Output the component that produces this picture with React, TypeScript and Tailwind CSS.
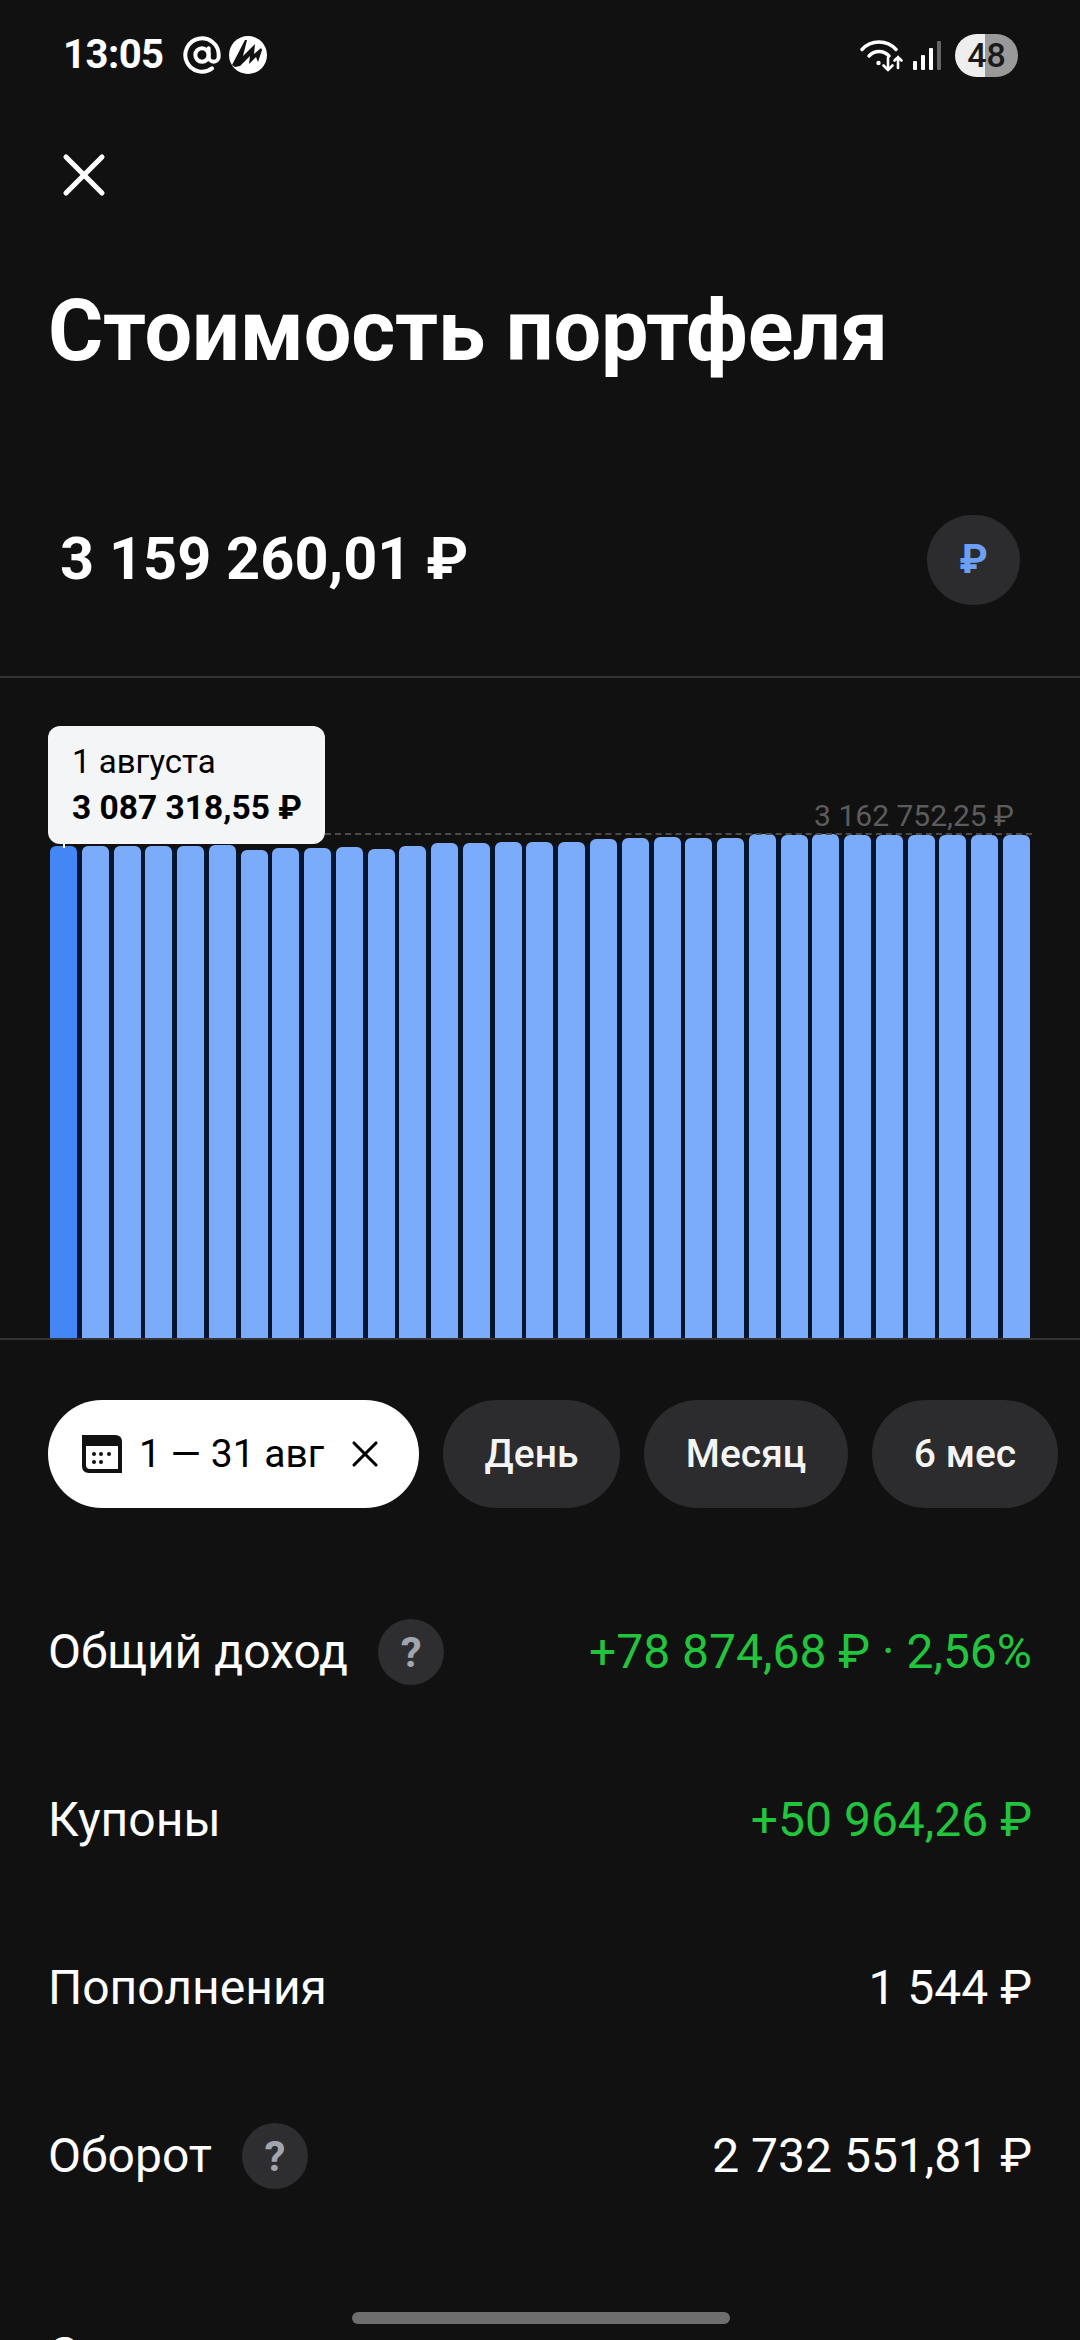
import React from 'react';
import { AtSign, X } from 'lucide-react';

// верх каждого столбика в пикселях экрана
const barTops = [
  846, 846, 846, 846, 846, 844.5, 850, 847.5, 847.5, 847, 849, 846, 842.5, 842.5, 842, 842,
  842, 838.5, 837.5, 837, 838, 838, 834, 835, 834, 835, 835, 835, 835, 835, 835,
];
const chartBottom = 1338;

const rows = [
  { label: 'Общий доход', value: '+78 874,68 ₽ · 2,56%', hint: true, green: true },
  { label: 'Купоны', value: '+50 964,26 ₽', hint: false, green: true },
  { label: 'Пополнения', value: '1 544 ₽', hint: false, green: false },
  { label: 'Оборот', value: '2 732 551,81 ₽', hint: true, green: false },
];

const WifiIcon = () => (
  <svg width="44" height="34" viewBox="0 0 44 34" fill="none" stroke="white" strokeWidth="3.4" strokeLinecap="round">
    <path d="M2 11.5C11 1.5 27 1.5 36 11.5" />
    <path d="M9 18C14.5 12 23.5 12 29 18" />
    <circle cx="18.5" cy="25" r="2.2" fill="white" stroke="none" />
    <path d="M28 20V32M23.5 27.5L28 32L32.5 27.5" strokeWidth="2.6" />
    <path d="M38 30V19M34.5 22.5L38 19L41.5 22.5" strokeWidth="2.6" />
  </svg>
);

const SignalIcon = () => (
  <div className="flex items-end gap-[4px] h-[29px]">
    <div className="w-[4px] h-[9px] bg-white rounded-[1px]" />
    <div className="w-[4px] h-[15px] bg-white rounded-[1px]" />
    <div className="w-[4px] h-[22px] bg-white rounded-[1px]" />
    <div className="w-[4px] h-[29px] bg-[#666] rounded-[1px]" />
  </div>
);

const MailRuLogo = () => (
  <svg width="38" height="38" viewBox="0 0 38 38">
    <circle cx="19" cy="19" r="19" fill="white" />
    <path d="M3 29L16 4L18 4L14 20L26 8L25 18L32 12L33 14L29 26L27 21L20 28L21 20L11 30L6 31Z" fill="#111112" />
  </svg>
);

const CalendarIcon = () => (
  <svg width="40" height="38" viewBox="0 0 40 38" fill="none">
    <path d="M0 0H33Q40 0 40 7V38H7Q0 38 0 31Z" fill="#111" />
    <path d="M4 11H36V34H8Q4 34 4 30Z" fill="white" />
    <circle cx="12" cy="19" r="2" fill="#111" />
    <circle cx="19" cy="19" r="2" fill="#111" />
    <circle cx="27" cy="19" r="2" fill="#111" />
    <circle cx="12" cy="27" r="2" fill="#111" />
    <circle cx="19" cy="27" r="2" fill="#111" />
  </svg>
);

const Hint = () => (
  <div className="w-[66px] h-[66px] rounded-full bg-[#2e2e30] flex items-center justify-center text-[#a2a5ad] text-[42px] font-bold">
    ?
  </div>
);

const Chip: React.FC<{ children: React.ReactNode; width: string }> = ({ children, width }) => (
  <div className={`h-[108px] rounded-full bg-[#2c2c2e] flex items-center justify-center shrink-0 text-[39px] font-medium text-[#f4f4f4] ${width}`}>
    {children}
  </div>
);

const App: React.FC = () => {
  return (
    <div className="relative h-[2340px] overflow-hidden bg-[#111112] text-white font-['Roboto',sans-serif]">
      {/* статус-бар */}
      <div className="h-[110px] pl-[63px] pr-[62px] flex items-center justify-between">
        <div className="flex items-center">
          <span className="text-[40px] font-bold tracking-[-0.5px] w-[119px]">13:05</span>
          <AtSign size={40} strokeWidth={2.4} />
          <div className="ml-[7px]">
            <MailRuLogo />
          </div>
        </div>
        <div className="flex items-center">
          <WifiIcon />
          <div className="ml-[9px]">
            <SignalIcon />
          </div>
          <div className="ml-[14px] w-[63px] h-[43px] rounded-full overflow-hidden flex items-center justify-center bg-[linear-gradient(90deg,#eeeeee_48%,#999999_48%)] text-[#1a1a1a] text-[34px] font-medium">
            48
          </div>
        </div>
      </div>

      <div className="h-[130px] pl-[48px] flex items-start pt-[29px]">
        <X size={72} strokeWidth={1.7} />
      </div>

      <h1 className="h-[184px] pl-[48px] flex items-center text-[84.5px] font-bold tracking-[-0.2px]">
        Стоимость портфеля
      </h1>

      <div className="mt-[91px] h-[90px] pl-[60px] pr-[60px] flex items-center justify-between">
        <span className="text-[59.5px] font-bold">3 159 260,01 ₽</span>
        <div className="w-[93px] h-[90px] rounded-full bg-[#2c2c2e] flex items-center justify-center text-[#6ba0f5] text-[40px] font-bold">
          ₽
        </div>
      </div>

      {/* график */}
      <div className="relative mt-[71px] h-[664px] border-t-2 border-b-2 border-[#333335] flex items-end px-[50px]">
        {barTops.map((top, i) => {
          const next = barTops[i + 1];
          return (
            <React.Fragment key={i}>
              <div
                className={`w-[27px] shrink-0 rounded-t-[6px] ${i === 0 ? 'bg-[#4287f5]' : 'bg-[#7bacfb]'}`}
                style={{ height: chartBottom - top }}
              />
              {next !== undefined && (
                <div
                  className="flex-1 bg-[#04152e]"
                  style={{ height: chartBottom - Math.max(top, next) - 3 }}
                />
              )}
            </React.Fragment>
          );
        })}
        <div className="absolute left-[325px] right-[48px] top-[155px] border-t-2 border-dashed border-[#4a4a4a]" />
        <div className="absolute right-[66px] top-[116px] text-[30px] leading-[44px] text-[#5c5c5c]">3 162 752,25 ₽</div>
        <div className="absolute left-[63px] top-[166px] w-[2px] h-[4px] bg-white" />
        <div className="absolute left-[48px] top-[48px] w-[277px] h-[118px] rounded-[12px] bg-[#f4f5f7] text-black pl-[24px] pt-[14px]">
          <div className="text-[33px] leading-[44px]">1 августа</div>
          <div className="text-[33.5px] leading-[48px] font-bold whitespace-nowrap">3 087 318,55 ₽</div>
        </div>
      </div>

      {/* периоды */}
      <div className="mt-[60px] pl-[48px] flex gap-[24px] overflow-hidden">
        <div className="h-[108px] w-[371px] rounded-full bg-white text-black flex items-center pl-[34px] shrink-0 text-[39px]">
          <CalendarIcon />
          <span className="ml-[17px]">1 — 31 авг</span>
          <X size={44} strokeWidth={1.7} className="ml-[19px]" />
        </div>
        <Chip width="w-[177px]">День</Chip>
        <Chip width="w-[204px]">Месяц</Chip>
        <Chip width="w-[186px]">6 мес</Chip>
      </div>

      {/* итоги */}
      <div className="mt-[60px] pl-[48px] pr-[48px]">
        {rows.map(row => (
          <div key={row.label} className="h-[168px] flex items-center justify-between text-[48px]">
            <div className="flex items-center gap-[30px]">
              <span>{row.label}</span>
              {row.hint && <Hint />}
            </div>
            <span className={row.green ? 'text-[#22c33d]' : 'text-white'}>{row.value}</span>
          </div>
        ))}
        <div className="mt-[31px] h-[168px] flex items-center text-[48px]">Сделки</div>
      </div>

      {/* полоска навигации */}
      <div className="absolute left-[352px] top-[2312px] w-[378px] h-[12px] rounded-full bg-[#6e6e6e]" />
    </div>
  );
};

export default App;
